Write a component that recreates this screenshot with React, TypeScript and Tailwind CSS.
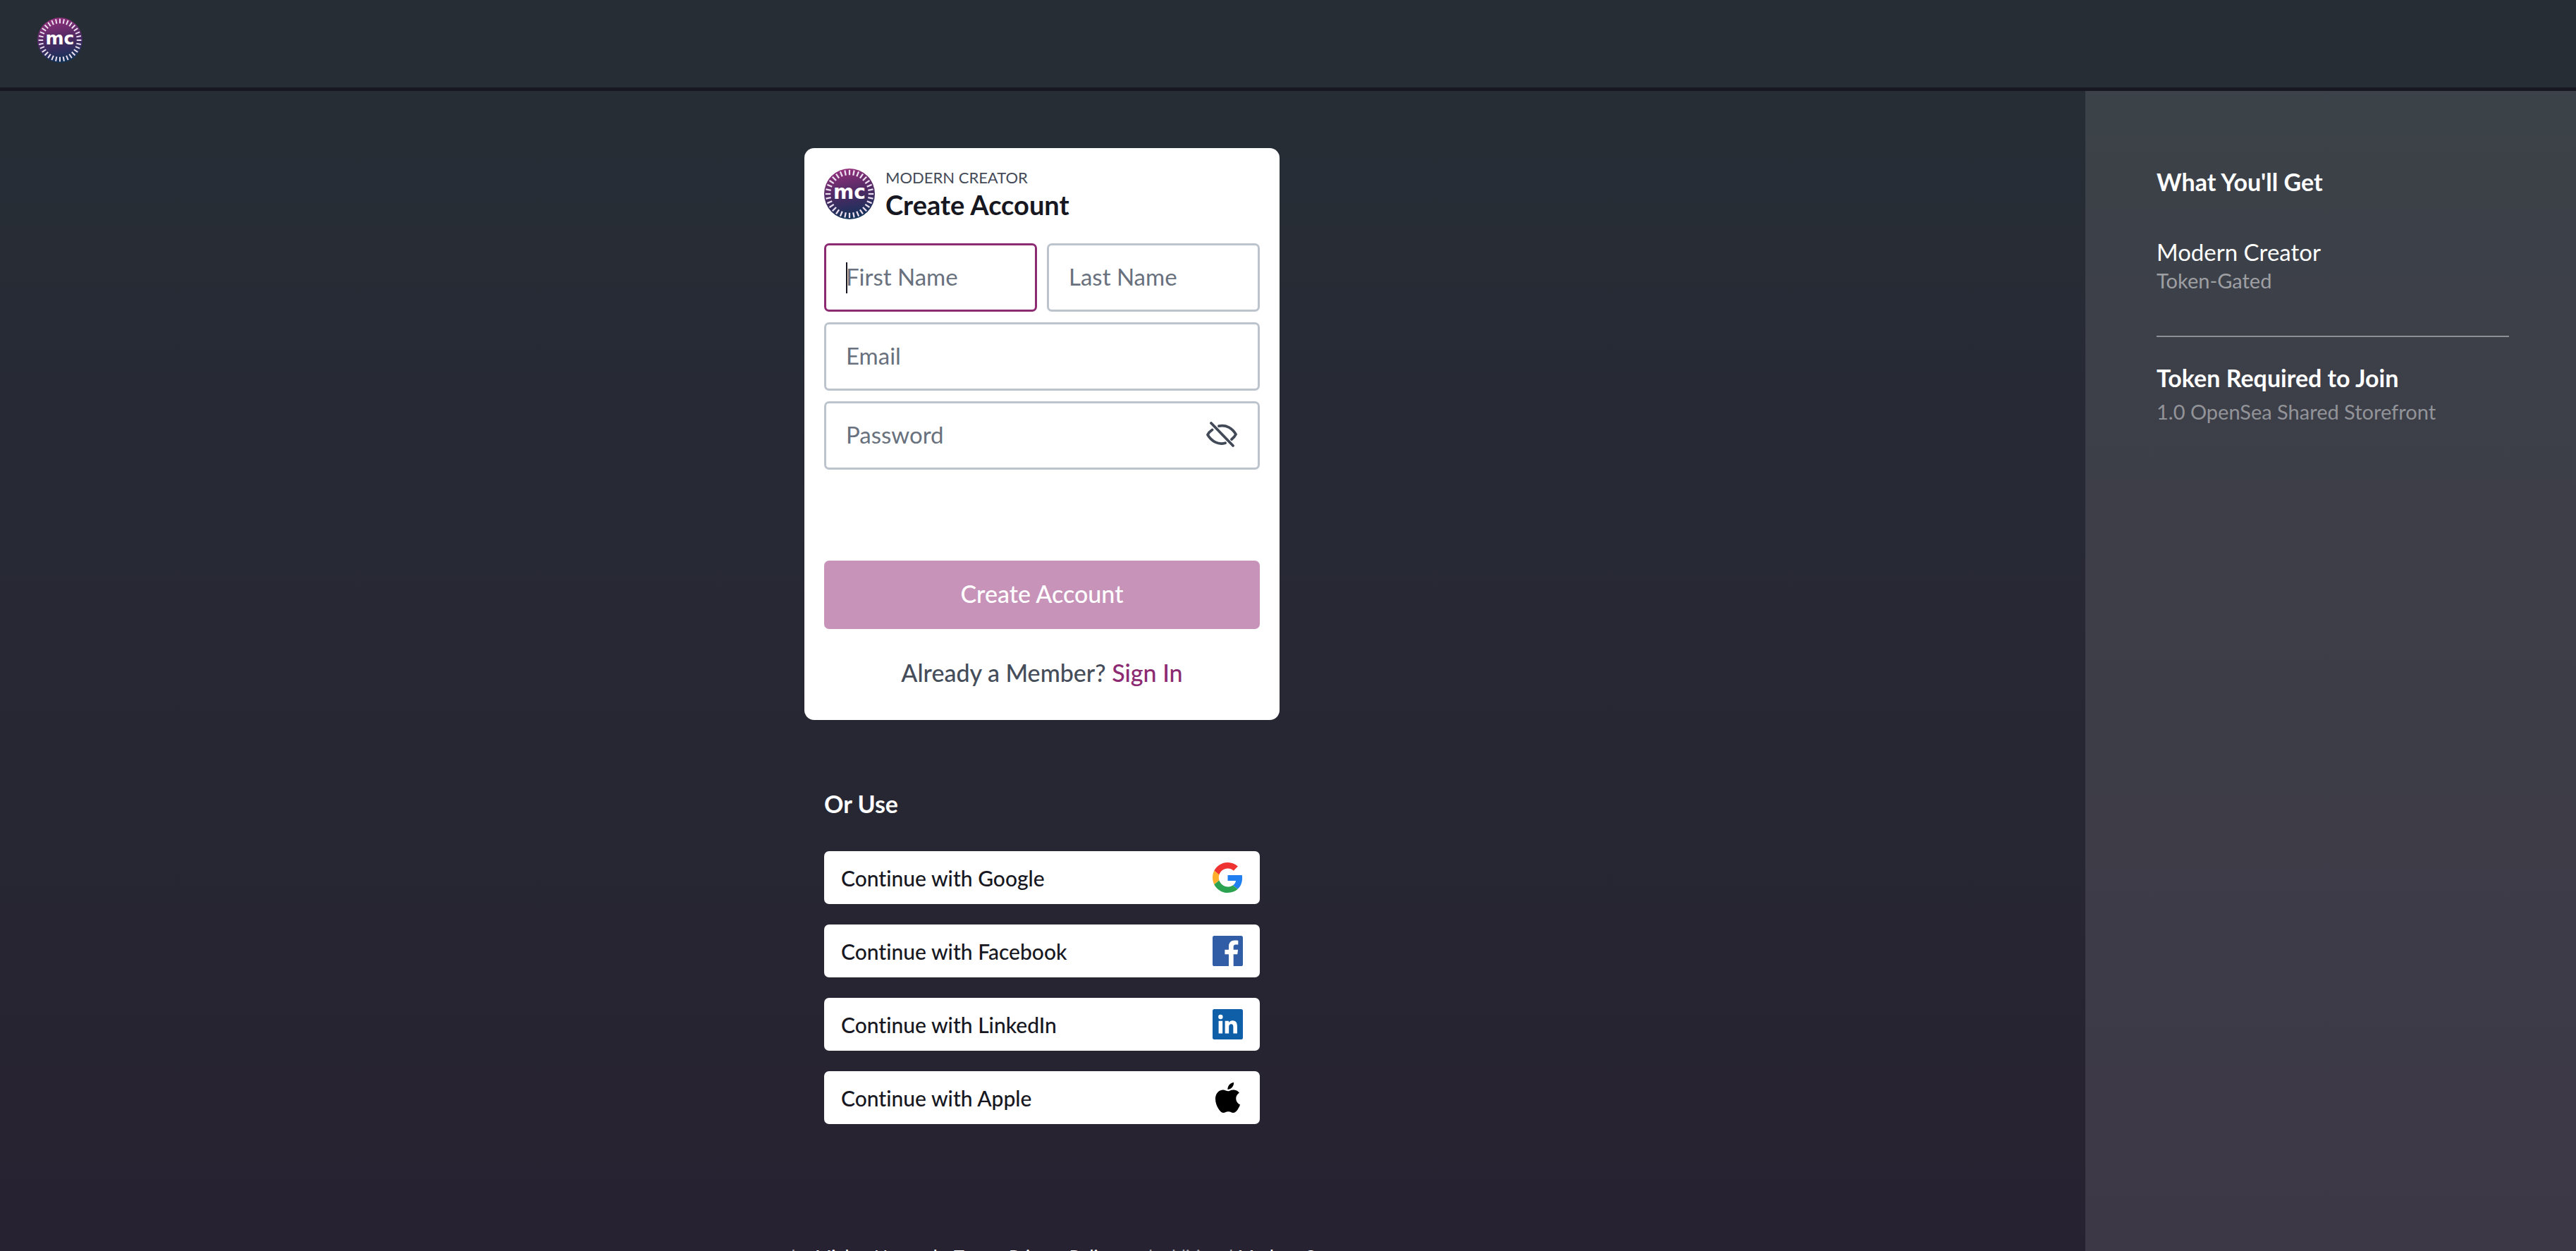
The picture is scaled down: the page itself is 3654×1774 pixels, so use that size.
import { useId, useState } from 'react';
import type { ReactNode } from 'react';

type Provider = {
  name: string;
  icon: ReactNode;
};

const ticks = Array.from({ length: 32 }, (_, index) => index * 11.25);

function Logo({ className }: { className: string }) {
  const gradientId = useId();

  return (
    <svg viewBox="0 0 64 64" className={className} aria-label="Modern Creator">
      <defs>
        <linearGradient id={gradientId} x1="0.4" y1="0" x2="0.6" y2="1">
          <stop offset="0" stopColor="#93307b" />
          <stop offset="0.5" stopColor="#4b2a63" />
          <stop offset="1" stopColor="#0f3358" />
        </linearGradient>
      </defs>
      <circle cx="32" cy="32" r="32" fill={`url(#${gradientId})`} />
      {ticks.map((angle) => (
        <rect
          key={angle}
          x="31"
          y="1.6"
          width="2"
          height="6.6"
          fill="#ece0f0"
          transform={`rotate(${angle} 32 32)`}
        />
      ))}
      <text
        x="32"
        y="38"
        textAnchor="middle"
        fill="#ffffff"
        fontFamily="'DejaVu Sans', sans-serif"
        fontWeight="700"
        fontSize="25"
      >
        mc
      </text>
    </svg>
  );
}

function EyeOffIcon() {
  return (
    <svg
      viewBox="0 0 44 36"
      className="h-9 w-11"
      fill="none"
      stroke="#424957"
      strokeWidth="3.8"
      strokeLinecap="round"
      strokeLinejoin="round"
    >
      <path d="M7 2l31 32" />
      <path d="M18 6.2C28 4 37 9 42 18c-1.500 3-3.500 5-6 7" />
      <path d="M8.500 11.500C5.500 13.500 3.500 15.500 2 18.500c6 10 15.500 14.500 25 11.700" />
    </svg>
  );
}

function GoogleIcon() {
  return (
    <svg viewBox="0 0 48 48" className="size-[43px]">
      <path
        fill="#ee3330"
        d="M24 9.5c3.54 0 6.71 1.22 9.21 3.6l6.85-6.85C35.9 2.38 30.47 0 24 0 14.62 0 6.51 5.38 2.56 13.22l7.98 6.19C12.43 13.72 17.74 9.5 24 9.5z"
      />
      <path
        fill="#227ff0"
        d="M46.98 24.55c0-1.57-.15-3.09-.38-4.55H24v9.02h12.94c-.58 2.96-2.26 5.48-4.78 7.18l7.73 6c4.51-4.18 7.09-10.36 7.09-17.65z"
      />
      <path
        fill="#feb02c"
        d="M10.53 28.59c-.48-1.45-.76-2.99-.76-4.59s.27-3.14.76-4.59l-7.98-6.19C.92 16.46 0 20.12 0 24c0 3.88.92 7.54 2.56 10.78l7.97-6.19z"
      />
      <path
        fill="#2aa250"
        d="M24 48c6.48 0 11.93-2.13 15.89-5.81l-7.73-6c-2.15 1.45-4.92 2.3-8.16 2.3-6.26 0-11.57-4.22-13.47-9.91l-7.98 6.19C6.51 42.62 14.62 48 24 48z"
      />
    </svg>
  );
}

function FacebookIcon() {
  return (
    <svg viewBox="0 0 24 24" className="size-[43px]" fill="#305da5">
      <path d="M22.676 0H1.324C.593 0 0 .593 0 1.324v21.352C0 23.408.593 24 1.324 24h11.494v-9.294H9.689v-3.621h3.129V8.41c0-3.099 1.894-4.785 4.659-4.785 1.325 0 2.464.097 2.796.141v3.24h-1.921c-1.5 0-1.792.721-1.792 1.771v2.311h3.584l-.465 3.63H16.56V24h6.115c.733 0 1.325-.592 1.325-1.324V1.324C24 .593 23.408 0 22.676 0" />
    </svg>
  );
}

function LinkedInIcon() {
  return (
    <svg viewBox="0 0 24 24" className="size-[43px]">
      <rect width="24" height="24" rx="1.4" fill="#0f5ea8" />
      <path
        fill="#ffffff"
        transform="translate(1.7 1.5) scale(0.87)"
        d="M20.447 20.452h-3.554v-5.569c0-1.328-.027-3.037-1.852-3.037-1.853 0-2.136 1.445-2.136 2.939v5.667H9.351V9h3.414v1.561h.046c.477-.9 1.637-1.85 3.37-1.85 3.601 0 4.267 2.37 4.267 5.455v6.286zM5.337 7.433a2.062 2.062 0 01-2.063-2.065 2.064 2.064 0 112.063 2.065zm1.782 13.019H3.555V9h3.564v11.452z"
      />
    </svg>
  );
}

function AppleIcon() {
  return (
    <svg viewBox="0 0 24 24" className="size-[43px]" fill="#000000">
      <path d="M12.152 6.896c-.948 0-2.415-1.078-3.96-1.04-2.04.027-3.91 1.183-4.961 3.014-2.117 3.675-.546 9.103 1.519 12.09 1.013 1.454 2.208 3.09 3.792 3.039 1.52-.065 2.09-.987 3.935-.987 1.831 0 2.35.987 3.96.948 1.637-.026 2.676-1.48 3.676-2.948 1.156-1.688 1.636-3.325 1.662-3.415-.039-.013-3.182-1.221-3.22-4.857-.026-3.04 2.48-4.494 2.597-4.559-1.429-2.09-3.623-2.324-4.39-2.376-2-.156-3.675 1.09-4.61 1.09zM15.53 3.83c.843-1.012 1.4-2.427 1.245-3.83-1.207.052-2.662.805-3.532 1.818-.78.896-1.454 2.338-1.273 3.714 1.338.104 2.715-.688 3.559-1.701" />
    </svg>
  );
}

const providers: Provider[] = [
  { name: 'Google', icon: <GoogleIcon /> },
  { name: 'Facebook', icon: <FacebookIcon /> },
  { name: 'LinkedIn', icon: <LinkedInIcon /> },
  { name: 'Apple', icon: <AppleIcon /> },
];

const inputClass =
  'h-[97px] w-full min-w-0 rounded-[7px] border-3 border-[#bcc3cd] bg-white px-7 pb-1 text-[33px] text-[#161722] outline-none placeholder:text-[#68717d]';

export default function App() {
  const [showPassword, setShowPassword] = useState(false);

  return (
    <div className="flex h-screen flex-col overflow-hidden bg-linear-to-b from-[#262e35] via-[#272834] to-[#272231] font-['Lato','Open_Sans',sans-serif] text-[34px] leading-[44px] text-white [font-variant-ligatures:none]">
      {/* Header */}
      <header className="flex shrink-0 border-b-5 border-[#161721] bg-[#262d34] px-[53px] pt-[25px] pb-[35px]">
        <a href="#">
          <Logo className="size-16" />
        </a>
      </header>

      <div className="flex min-h-0 flex-1">
        {/* Content */}
        <main className="flex min-w-0 flex-1 flex-col items-center pt-[81px] pr-0.5">
          <section className="w-full max-w-[674px] shrink-0 rounded-[14px] bg-white px-7 pt-[27px] pb-[45px]">
            <div className="flex items-center gap-[15px]">
              <Logo className="size-[72px]" />
              <div>
                <p className="text-[22px] leading-[30px] text-[#454b58]">
                  MODERN CREATOR
                </p>
                <h1 className="text-[38px] leading-[46px] font-bold text-[#161721]">
                  Create Account
                </h1>
              </div>
            </div>

            <form
              className="mt-8 flex flex-col gap-[15px]"
              onSubmit={(event) => event.preventDefault()}
            >
              <div className="grid grid-cols-2 gap-[14px]">
                <div className="relative">
                  <input
                    type="text"
                    aria-label="First Name"
                    placeholder="First Name"
                    className={`${inputClass} border-[#8c2a72]!`}
                  />
                  <span className="absolute top-[27px] left-[31px] h-11 w-0.5 bg-[#161721]" />
                </div>
                <input
                  type="text"
                  aria-label="Last Name"
                  placeholder="Last Name"
                  className={inputClass}
                />
              </div>
              <input
                type="email"
                aria-label="Email"
                placeholder="Email"
                className={inputClass}
              />
              <div className="relative">
                <input
                  type={showPassword ? 'text' : 'password'}
                  aria-label="Password"
                  placeholder="Password"
                  className={inputClass}
                />
                <button
                  type="button"
                  aria-label="Show password"
                  className="absolute inset-y-0 right-8 flex items-center pb-1"
                  onClick={() => setShowPassword((state) => !state)}
                >
                  <EyeOffIcon />
                </button>
              </div>

              <button
                type="submit"
                className="mt-[114px] h-[97px] rounded-[7px] bg-[#c793b9] pb-1 font-medium text-white"
              >
                Create Account
              </button>
            </form>

            <p className="mt-10 text-center font-medium text-[#454d5a]">
              Already a Member?{' '}
              <a href="#" className="text-[#8c2a72]">
                Sign In
              </a>
            </p>
          </section>

          {/* Social sign up */}
          <section className="mt-[97px] w-full max-w-[674px] shrink-0 px-7">
            <h2 className="font-bold">Or Use</h2>
            <div className="mt-[45px] flex flex-col gap-[29px]">
              {providers.map((provider) => (
                <button
                  key={provider.name}
                  type="button"
                  className="flex h-[75px] items-center justify-between rounded-[7px] bg-white px-6 text-[30px] leading-[38px] font-medium text-[#161721]"
                >
                  Continue with {provider.name}
                  {provider.icon}
                </button>
              ))}
            </div>
          </section>

          <p className="mt-[169px] shrink-0 text-center text-[25px] leading-[36px] text-white/60">
            agree to the{' '}
            <a href="#" className="font-medium text-white">
              Mighty Networks Terms
            </a>
            ,{' '}
            <a href="#" className="font-medium text-white">
              Privacy Policy
            </a>
            , and additional{' '}
            <a href="#" className="font-medium text-white">
              Modern Creator
            </a>
            .
          </p>
        </main>

        {/* Sidebar */}
        <aside className="w-[696px] shrink-0 bg-white/10 pt-[107px] pr-[95px] pl-[101px]">
          <h2 className="font-bold">What You'll Get</h2>
          <p className="mt-[55px] text-[33px]">Modern Creator</p>
          <p className="text-[29px] leading-[38px] text-white/50">Token-Gated</p>
          <hr className="mt-[59px] border-t-2 border-[#8d9196]" />
          <h2 className="mt-9 font-bold">Token Required to Join</h2>
          <p className="mt-[7px] text-[29px] leading-[38px] text-white/45">
            1.0 OpenSea Shared Storefront
          </p>
        </aside>
      </div>
    </div>
  );
}
